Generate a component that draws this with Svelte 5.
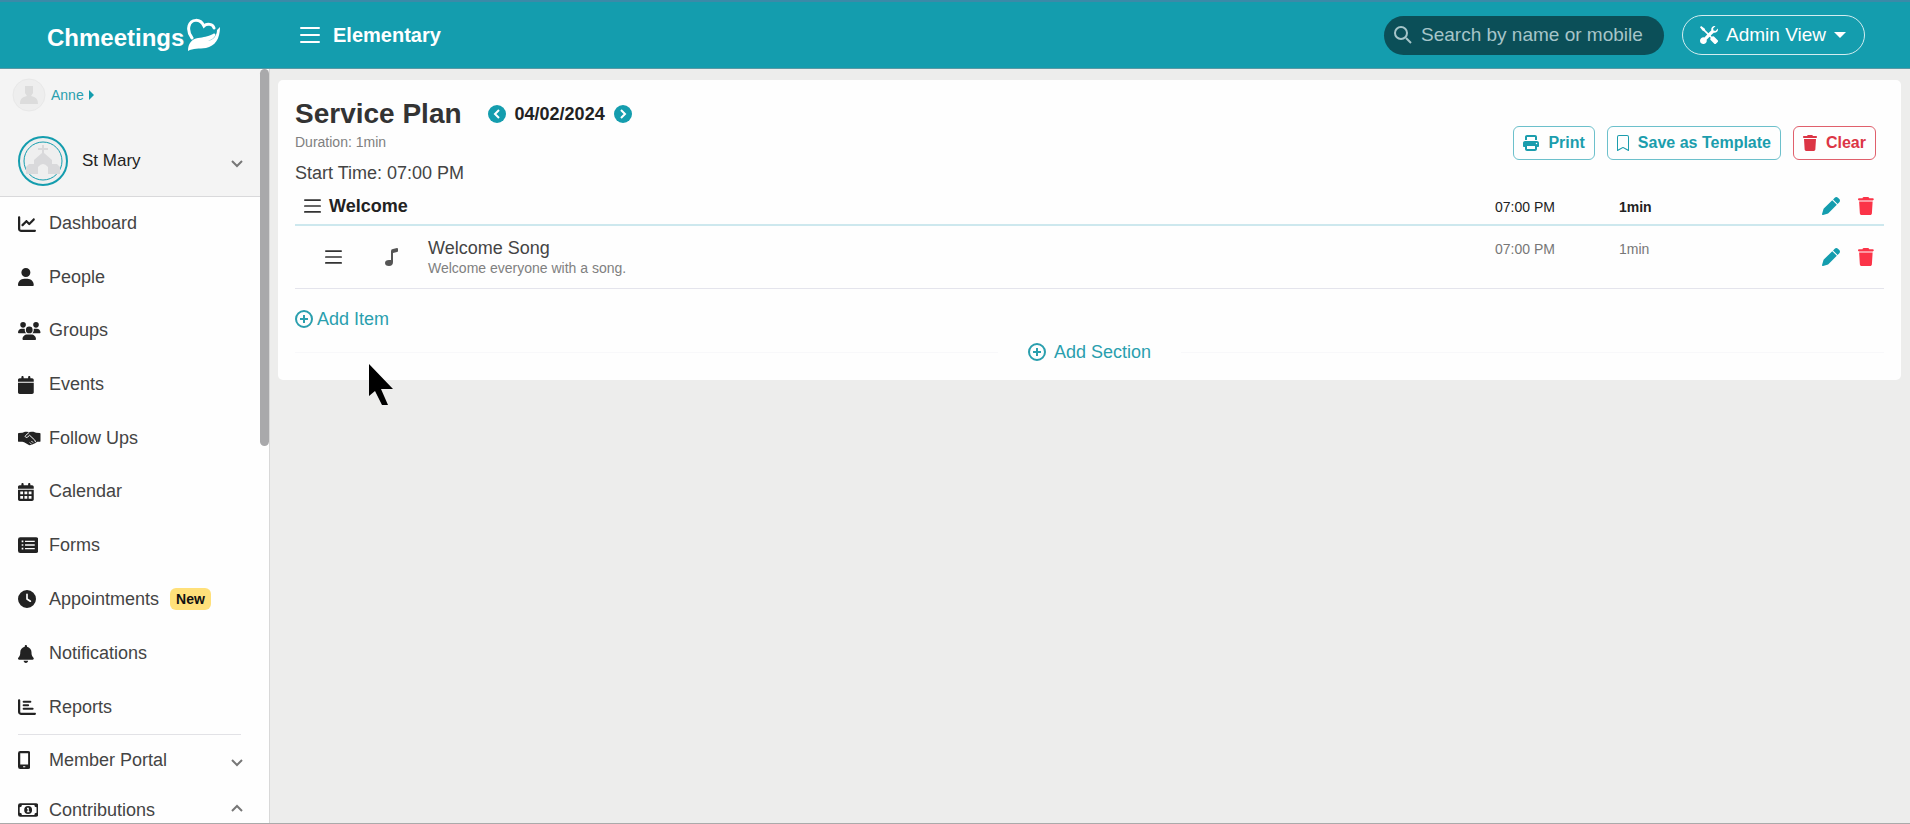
<script>
  const icons = {
    dashboard: { box: '0 0 512 512', d: 'M64 64c0-17.7-14.3-32-32-32S0 46.3 0 64V400c0 44.2 35.8 80 80 80H480c17.7 0 32-14.3 32-32s-14.3-32-32-32H80c-8.8 0-16-7.2-16-16V64zm406.6 86.6c12.5-12.5 12.5-32.8 0-45.3s-32.8-12.5-45.3 0L320 210.7l-57.4-57.4c-12.5-12.5-32.8-12.5-45.3 0l-112 112c-12.5 12.5-12.5 32.8 0 45.3s32.8 12.5 45.3 0L240 221.3l57.4 57.4c12.5 12.5 32.8 12.5 45.3 0l128-128z' },
    people: { box: '0 0 448 512', d: 'M224 256A128 128 0 1 0 224 0a128 128 0 1 0 0 256zm-45.7 48C79.8 304 0 383.8 0 482.3C0 498.7 13.3 512 29.7 512H418.3c16.4 0 29.7-13.3 29.7-29.7C448 383.8 368.2 304 269.7 304H178.3z' },
    groups: { box: '0 0 640 512', d: 'M64 80a80 80 0 1 1 160 0a80 80 0 1 1-160 0zM432 80a80 80 0 1 1 160 0a80 80 0 1 1-160 0zM0 299c0-59 48-107 107-107h43c16 0 31 4 45 10c-1 7-2 14-2 22c0 38 17 72 43 96H21c-12 0-21-10-21-21zM405 320c26-24 43-58 43-96c0-8-1-15-2-22c14-6 29-10 45-10h43c59 0 106 48 106 107c0 11-9 21-21 21H405zM224 224a96 96 0 1 1 192 0a96 96 0 1 1-192 0zM128 485c0-73 60-133 133-133h118c73 0 133 60 133 133c0 15-12 27-27 27H155c-15 0-27-12-27-27z' },
    events: { box: '0 0 448 512', d: 'M96 32V64H48C21.5 64 0 85.5 0 112v48H448V112c0-26.5-21.5-48-48-48H352V32c0-17.7-14.3-32-32-32s-32 14.3-32 32V64H160V32c0-17.7-14.3-32-32-32S96 14.3 96 32zM448 192H0V464c0 26.5 21.5 48 48 48H400c26.5 0 48-21.5 48-48V192z' },
    calendar: { box: '0 0 448 512', d: 'M96 32V64H48C21.5 64 0 85.5 0 112v48H448V112c0-26.5-21.5-48-48-48H352V32c0-17.7-14.3-32-32-32s-32 14.3-32 32V64H160V32c0-17.7-14.3-32-32-32S96 14.3 96 32zM448 192H0V464c0 26.5 21.5 48 48 48H400c26.5 0 48-21.5 48-48V192zM64 240h80v80H64zM184 240h80v80h-80zM304 240h80v80h-80zM64 368h80v80H64zM184 368h80v80h-80zM304 368h80v80h-80z' },
    forms: { box: '0 0 576 512', d: 'M64 32H512a64 64 0 0 1 64 64V416a64 64 0 0 1-64 64H64a64 64 0 0 1-64-64V96A64 64 0 0 1 64 32zM104 128v48h48v-48zM200 132v40h276v-40zM104 232v48h48v-48zM200 236v40h276v-40zM104 336v48h48v-48zM200 340v40h276v-40z' },
    appointments: { box: '0 0 512 512', d: 'M256 0a256 256 0 1 1 0 512A256 256 0 1 1 256 0zM232 120V256c0 8 4 15.5 10.7 20l96 64c11 7.4 25.9 4.4 33.3-6.7s4.4-25.9-6.7-33.3L280 243.2V120c0-13.3-10.7-24-24-24s-24 10.7-24 24z' },
    notifications: { box: '0 0 448 512', d: 'M224 0c-17.7 0-32 14.3-32 32V51.2C119 66 64 130.6 64 208v18.8c0 47-17.3 92.4-48.5 127.6l-7.4 8.3c-8.4 9.4-10.4 22.9-5.3 34.4S19.4 416 32 416H416c12.6 0 24-7.4 29.2-18.9s3.1-25-5.3-34.4l-7.4-8.3C401.3 319.2 384 273.9 384 226.8V208c0-77.4-55-142-128-156.8V32c0-17.7-14.3-32-32-32zm45.3 493.3c12-12 18.7-28.3 18.7-45.3H160c0 17 6.7 33.3 18.7 45.3s28.3 18.7 45.3 18.7s33.3-6.7 45.3-18.7z' },
    reports: { box: '0 0 512 512', d: 'M32 32c17.7 0 32 14.3 32 32V400c0 8.8 7.2 16 16 16H480c17.7 0 32 14.3 32 32s-14.3 32-32 32H80c-44.2 0-80-35.8-80-80V64C0 46.3 14.3 32 32 32zM160 80H352a28 28 0 0 1 0 56H160a28 28 0 0 1 0-56zM160 180H288a28 28 0 0 1 0 56H160a28 28 0 0 1 0-56zM160 280H416a28 28 0 0 1 0 56H160a28 28 0 0 1 0-56z' },
    portal: { box: '16 0 352 512', d: 'M80 0H304a64 64 0 0 1 64 64V448a64 64 0 0 1-64 64H80a64 64 0 0 1-64-64V64A64 64 0 0 1 80 0zM80 64V384H304V64zM160 432v32h64v-32z' },
    contributions: { box: '0 0 576 512', d: 'M64 64H512a64 64 0 0 1 64 64V384a64 64 0 0 1-64 64H64a64 64 0 0 1-64-64V128A64 64 0 0 1 64 64zM112 112a64 64 0 0 1-64 64V336a64 64 0 0 1 64 64H464a64 64 0 0 1 64-64V176a64 64 0 0 1-64-64zM288 144a112 112 0 1 1 0 224a112 112 0 1 1 0-224zM256 192v32h16v64h-20v32h76v-32h-20v-96z' },
    print: { box: '0 0 512 512', d: 'M128 0C92.7 0 64 28.7 64 64v96h64V64H384v96h64V64c0-35.3-28.7-64-64-64H128zM384 352v96H128V352H384zm64 32h32c17.7 0 32-14.3 32-32V256c0-35.3-28.7-64-64-64H64c-35.3 0-64 28.7-64 64v96c0 17.7 14.3 32 32 32H64v64c0 35.3 28.7 64 64 64H384c35.3 0 64-28.7 64-64V384zM432 248a24 24 0 1 1 0 48 24 24 0 1 1 0-48z' },
    bookmark: { box: '2 0 12 16', d: 'M2 2a2 2 0 0 1 2-2h8a2 2 0 0 1 2 2v13.5a.5.5 0 0 1-.777.416L8 13.101l-5.223 2.815A.5.5 0 0 1 2 15.5zm2-1a1 1 0 0 0-1 1v12.566l4.723-2.482a.5.5 0 0 1 .554 0L13 14.566V2a1 1 0 0 0-1-1z' },
    trash: { box: '0 0 448 512', d: 'M135.2 17.7L128 32H32C14.3 32 0 46.3 0 64S14.3 96 32 96H416c17.7 0 32-14.3 32-32s-14.3-32-32-32H320l-7.2-14.3C307.4 6.8 296.3 0 284.2 0H163.8c-12.1 0-23.2 6.8-28.6 17.7zM416 128H32L53.2 467c1.6 25.3 22.6 45 47.9 45H346.9c25.3 0 46.3-19.7 47.9-45L416 128z' },
    pen: { box: '0 0 512 512', d: 'M362.7 19.3L314.3 67.7 444.3 197.7l48.4-48.4c25-25 25-65.5 0-90.5L453.3 19.3c-25-25-65.5-25-90.5 0zm-71 71L58.6 323.5c-10.4 10.4-18 23.3-22.2 37.4L1 481.2C-1.5 489.7 .8 498.8 7 505s15.3 8.5 23.7 6.1l120.3-35.4c14.1-4.2 27-11.8 37.4-22.2L421.7 220.3 291.7 90.3z' },
    tools: { box: '0 0 16 16', d: 'M1 0 0 1l2.2 3.081a1 1 0 0 0 .815.419h.07a1 1 0 0 1 .708.293l2.675 2.675-2.617 2.654A3.003 3.003 0 0 0 0 13a3 3 0 1 0 5.878-.851l2.654-2.617.968.968-.305.914a1 1 0 0 0 .242 1.023l3.27 3.27a.997.997 0 0 0 1.414 0l1.586-1.586a.997.997 0 0 0 0-1.414l-3.27-3.27a1 1 0 0 0-1.023-.242L10.5 9.5l-.96-.96 2.68-2.643A3.005 3.005 0 0 0 16 3q0-.405-.102-.777l-2.14 2.141L12 4l-.364-1.757L13.777.102a3 3 0 0 0-3.675 3.68L7.462 6.46 4.793 3.793a1 1 0 0 1-.293-.707v-.071a1 1 0 0 0-.419-.814z' },
  };

  const links = [
    { label: 'Dashboard', icon: 'dashboard' },
    { label: 'People', icon: 'people' },
    { label: 'Groups', icon: 'groups' },
    { label: 'Events', icon: 'events' },
    { label: 'Follow Ups', icon: 'handshake' },
    { label: 'Calendar', icon: 'calendar' },
    { label: 'Forms', icon: 'forms' },
    { label: 'Appointments', icon: 'appointments', badge: 'New' },
    { label: 'Notifications', icon: 'notifications' },
    { label: 'Reports', icon: 'reports' },
  ];

  let menus = $state([
    { label: 'Member Portal', icon: 'portal', open: false },
    { label: 'Contributions', icon: 'contributions', open: true },
  ]);

  const sections = [
    {
      name: 'Welcome',
      time: '07:00 PM',
      duration: '1min',
      items: [
        { name: 'Welcome Song', note: 'Welcome everyone with a song.', time: '07:00 PM', duration: '1min' },
      ],
    },
  ];

  let search = $state('');
</script>

{#snippet icon(name)}
  {#if name === 'handshake'}
    <svg class="icon" viewBox="0 0 640 512" aria-hidden="true">
      <path d="M0 138q0-24 24-24l104-8 70-26q60-10 118 8q60-18 122-8l76 26 102 8q24 0 24 24v200q0 24-24 24h-70l-60 42-40 16q-20 28-60 22-52 34-100 0L174 378l-50-16H24q-24 0-24-24z" />
      <path class="cut" d="M322 92L212 190q-20 34 12 48 28 8 52-12l54-48 146 138q26 26 16 56M380 340l48 48M336 384l38 38" />
    </svg>
  {:else}
    <svg class="icon" viewBox={icons[name].box} aria-hidden="true">
      <path fill-rule="evenodd" d={icons[name].d} />
    </svg>
  {/if}
{/snippet}

{#snippet bars()}
  <svg class="bars" viewBox="0 0 20 16" aria-hidden="true"><path d="M1 1h18M1 8h18M1 15h18" /></svg>
{/snippet}

{#snippet chevron(up)}
  <svg class="chevron" class:up viewBox="0 0 12 8" aria-hidden="true"><path d="M1 1l5 5 5-5" /></svg>
{/snippet}

{#snippet plus()}
  <svg class="plus" viewBox="0 0 18 18" aria-hidden="true">
    <circle cx="9" cy="9" r="8" /><path d="M9 5v8M5 9h8" />
  </svg>
{/snippet}

{#snippet actions(name)}
  <div class="actions">
    <button class="edit" aria-label="Edit {name}">{@render icon('pen')}</button>
    <button class="delete" aria-label="Delete {name}">{@render icon('trash')}</button>
  </div>
{/snippet}

<div class="page">
  <header class="topbar">
    <a class="brand" href="/">
      <span>Chmeetings</span>
      <svg viewBox="0 0 34 34" aria-hidden="true">
        <path class="heart" d="M5 20C2 16 1 12 2 8C4 1 13 0 17 8C20 5 26 6 27 10" />
        <path d="M1 33c0-8 4-12 10-13 6-1 9-1 15-4 2-1 3 0 2 2-1 2-4 4-7 5 5-1 9-5 9-11l3-3c0 12-5 19-14 21-7 1-13 0-18 3z" />
      </svg>
    </a>
    <button class="toggle" aria-label="Toggle menu">{@render bars()}</button>
    <h1>Elementary</h1>
    <label class="search">
      <svg viewBox="0 0 18 18" aria-hidden="true"><circle cx="7" cy="7" r="6" /><path d="M12 12l5 5" /></svg>
      <input type="text" placeholder="Search by name or mobile" aria-label="Search" bind:value={search} />
    </label>
    <button class="view">
      {@render icon('tools')}
      Admin View
      <svg class="caret" viewBox="0 0 12 6" aria-hidden="true"><path d="M0 0h12L6 6z" /></svg>
    </button>
  </header>

  <div class="body">
    <aside class="sidebar">
      <div class="menu">
        <div class="account">
          <a class="user" href="/profile">
            <svg class="avatar" viewBox="0 0 34 34" aria-hidden="true">
              <circle cx="17" cy="17" r="16" /><path d="M13 8h8v7l-2 3c5 1 7 3 7 8H8c0-5 2-7 7-8l-2-3z" />
            </svg>
            Anne
            <svg class="arrow" viewBox="0 0 5 10" aria-hidden="true"><path d="M0 0l5 5-5 5z" /></svg>
          </a>
          <button class="church">
            <svg class="crest" viewBox="0 0 52 52" aria-hidden="true">
              <circle class="ring" cx="26" cy="26" r="24" stroke-width="2" />
              <circle class="ring" cx="26" cy="26" r="19" stroke-width="1" />
              <path d="M25 10h2v3h4v2h-4v3l8 7v4h5l3 3v7H31v-7q-5-6-10 0v7H9v-7l3-3h5v-4l8-7v-3h-4v-2h4z" />
            </svg>
            <span>St Mary</span>
            {@render chevron(false)}
          </button>
        </div>

        <nav>
          <div class="links">
            {#each links as link}
              <a class="link" href="/{link.icon}">
                {@render icon(link.icon)}
                {link.label}
                {#if link.badge}<span class="badge">{link.badge}</span>{/if}
              </a>
            {/each}
          </div>
          <hr />
          {#each menus as menu}
            <button class="group" aria-expanded={menu.open} onclick={() => (menu.open = !menu.open)}>
              {@render icon(menu.icon)}
              <span>{menu.label}</span>
              {@render chevron(menu.open)}
            </button>
          {/each}
        </nav>
      </div>
      <div class="scroll"><div class="thumb"></div></div>
    </aside>

    <main>
      <section class="card">
        <div class="head">
          <div>
            <div class="title">
              <h2>Service Plan</h2>
              <div class="date">
                <button aria-label="Previous"><svg viewBox="0 0 18 18"><path d="M11 5L7 9l4 4" /></svg></button>
                <span>04/02/2024</span>
                <button aria-label="Next"><svg viewBox="0 0 18 18"><path d="M7 5l4 4-4 4" /></svg></button>
              </div>
            </div>
            <p class="length">Duration: 1min</p>
            <p class="start">Start Time: 07:00 PM</p>
          </div>
          <div class="tools">
            <button>{@render icon('print')}Print</button>
            <button>{@render icon('bookmark')}Save as Template</button>
            <button class="danger">{@render icon('trash')}Clear</button>
          </div>
        </div>

        {#each sections as section}
          <div class="row section">
            <div class="name">{@render bars()}<h3>{section.name}</h3></div>
            <span class="time">{section.time}</span>
            <strong class="time">{section.duration}</strong>
            {@render actions(section.name)}
          </div>
          {#each section.items as item}
            <div class="row item">
              <div class="name">
                {@render bars()}
                <svg class="music" viewBox="0 0 13 18" aria-hidden="true">
                  <path d="M6 3q0-2 2-2l4-1q1 0 1 1v2q0 1-1 1l-4 1v9q0 4-4 4-4 0-4-3t4-3h2z" />
                </svg>
                <div>
                  <p class="song">{item.name}</p>
                  <p class="note">{item.note}</p>
                </div>
              </div>
              <span class="time">{item.time}</span>
              <span class="time">{item.duration}</span>
              {@render actions(item.name)}
            </div>
          {/each}
          <button class="add">{@render plus()}Add Item</button>
        {/each}

        <div class="more">
          <button class="add wide">{@render plus()}Add Section</button>
        </div>
      </section>
    </main>
  </div>

  <svg class="cursor" viewBox="0 0 26 42" aria-hidden="true">
    <path d="M1 0v32l6-5 7 14h6l-7-16h12z" />
  </svg>
</div>

<style>
  :global(body) {
    margin: 0;
    font-family: "Liberation Sans", Arial, sans-serif;
    font-size: 18px;
    color: #444;
  }
  .page {
    position: relative;
    box-sizing: border-box;
    height: 100vh;
    overflow: hidden;
    display: flex;
    flex-direction: column;
    border-bottom: 1px solid #aaa;
  }
  button {
    font: inherit;
    color: inherit;
    background: none;
    border: 0;
    padding: 0;
    cursor: pointer;
  }
  a {
    color: inherit;
    text-decoration: none;
  }
  h1, h2, h3, p {
    margin: 0;
  }
  svg {
    display: block;
    flex: none;
    fill: currentColor;
  }
  .icon {
    height: 18px;
  }
  .cut {
    fill: none;
    stroke: #fefefe;
    stroke-width: 28;
  }
  .bars {
    width: 20px;
    height: 16px;
    fill: none;
    stroke: currentColor;
    stroke-width: 2;
    stroke-linecap: round;
  }
  .chevron {
    width: 12px;
    height: 8px;
    margin-top: 6px;
    fill: none;
    stroke: #777;
    stroke-width: 2;
  }
  .chevron.up {
    margin: 0 0 4px;
    transform: rotate(180deg);
  }

  .topbar {
    flex: none;
    box-sizing: border-box;
    height: 69px;
    padding: 0 45px 0 47px;
    display: flex;
    align-items: center;
    background: #149dae;
    border-top: 2px solid #3b8aa8;
    border-bottom: 1px solid #5b98a4;
    color: #fff;
  }
  .brand {
    display: flex;
    align-items: center;
    width: 253px;
    font-size: 24px;
    font-weight: bold;
  }
  .brand span {
    padding-top: 6px;
  }
  .brand svg {
    width: 34px;
    height: 34px;
    margin-left: 3px;
  }
  .heart {
    fill: none;
    stroke: #fff;
    stroke-width: 3;
    stroke-linecap: round;
  }
  h1 {
    flex: 1;
    margin-left: 13px;
    font-size: 20px;
  }
  .search {
    display: flex;
    align-items: center;
    gap: 9px;
    box-sizing: border-box;
    width: 280px;
    height: 39px;
    padding: 0 10px;
    border-radius: 20px;
    background: #0b4f58;
    color: #a6c5c9;
  }
  .search svg {
    width: 18px;
    height: 18px;
    fill: none;
    stroke: currentColor;
    stroke-width: 2;
  }
  .search input {
    flex: 1;
    min-width: 0;
    padding: 0;
    border: 0;
    outline: 0;
    background: none;
    font: inherit;
    font-size: 19px;
    color: #fff;
  }
  .search input::placeholder {
    color: #a6c5c9;
  }
  .view {
    display: flex;
    align-items: center;
    gap: 8px;
    height: 40px;
    margin-left: 18px;
    padding: 0 18px 0 17px;
    border: 1px solid #d3edf0;
    border-radius: 20px;
    font-size: 19px;
  }
  .caret {
    width: 12px;
    height: 6px;
  }

  .body {
    flex: 1;
    min-height: 0;
    display: flex;
  }
  .sidebar {
    flex: none;
    width: 269px;
    display: flex;
    overflow: hidden;
    background: #fefefe;
    border-right: 1px solid #d8d8d8;
  }
  .menu {
    flex: 1;
  }
  .scroll {
    width: 9px;
  }
  .thumb {
    height: 50%;
    border-radius: 5px;
    background: #a9a9ab;
  }
  .account {
    background: #f4f4f4;
    border-bottom: 1px solid #d9d9db;
  }
  .user {
    display: flex;
    align-items: center;
    height: 52px;
    padding-left: 12px;
    font-size: 14px;
    color: #2a9fae;
  }
  .avatar {
    width: 34px;
    height: 34px;
    margin-right: 5px;
    fill: #dcdcdc;
  }
  .avatar circle {
    fill: #eee;
    stroke: #e8e8e8;
  }
  .arrow {
    width: 5px;
    height: 10px;
    margin-left: 5px;
    fill: #149dae;
  }
  .church {
    display: flex;
    align-items: center;
    width: 100%;
    height: 75px;
    padding: 4px 17px 0;
    font-size: 17px;
    color: #222;
  }
  .crest {
    width: 52px;
    height: 52px;
    margin-right: 13px;
    fill: #d9d9db;
  }
  .ring {
    fill: #efefef;
    stroke: #149dae;
  }
  .church span,
  .group span {
    flex: 1;
    text-align: left;
  }
  .links {
    display: grid;
    height: 537px;
  }
  .link,
  .group {
    display: grid;
    grid-template-columns: 31px auto 1fr;
    align-items: center;
    justify-items: start;
    box-sizing: border-box;
    width: 100%;
    padding: 0 17px 0 18px;
  }
  .group {
    height: 50px;
    grid-template-columns: 31px 1fr auto;
  }
  .link .icon,
  .group .icon {
    fill: #222;
  }
  .badge {
    margin-left: 11px;
    padding: 3px 6px;
    border-radius: 6px;
    background: #ffe07a;
    color: #111;
    font-size: 14px;
    line-height: 16px;
    font-weight: bold;
  }
  hr {
    margin: 0 19px 0 18px;
    border: 0;
    border-top: 1px solid #e2e2e6;
  }

  main {
    flex: 1;
    min-width: 0;
    padding: 11px 9px 0 8px;
    background: #ededec;
  }
  .card {
    padding: 17px;
    border-radius: 5px;
    background: #fefefe;
  }
  .head {
    display: flex;
    align-items: flex-start;
    justify-content: space-between;
    height: 96px;
  }
  .title {
    display: flex;
    align-items: center;
    gap: 26px;
    height: 34px;
  }
  h2 {
    font-size: 28px;
    color: #333;
  }
  .date {
    display: flex;
    align-items: center;
    gap: 9px;
    font-weight: bold;
    color: #222;
  }
  .date svg {
    width: 18px;
    height: 18px;
    border-radius: 50%;
    background: #149dae;
    fill: none;
    stroke: #fff;
    stroke-width: 2;
  }
  .length {
    font-size: 14px;
    line-height: 22px;
    color: #808080;
  }
  .start {
    line-height: 40px;
  }
  .tools {
    display: flex;
    gap: 12px;
    padding: 29px 8px 0 0;
  }
  .tools button {
    display: flex;
    align-items: center;
    gap: 9px;
    box-sizing: border-box;
    height: 34px;
    padding: 0 9px;
    border: 1px solid #6cc0cb;
    border-radius: 6px;
    font-size: 16px;
    font-weight: bold;
    color: #1b9dad;
  }
  .tools .icon {
    height: 16px;
  }
  .tools .danger {
    border-color: #e0606c;
    color: #dc3545;
  }

  .row {
    display: grid;
    grid-template-columns: 1fr 124px 203px 62px;
    align-items: center;
  }
  .section {
    height: 25px;
    padding-bottom: 6px;
    border-bottom: 2px solid #cde8ee;
    color: #222;
  }
  .name {
    display: flex;
    align-items: center;
  }
  .name .bars {
    width: 17px;
    height: 14px;
    stroke: #333;
  }
  .section .name {
    gap: 8px;
    padding-left: 9px;
  }
  .section .time {
    padding-top: 2px;
  }
  h3 {
    font-size: 18px;
    line-height: 24px;
  }
  .time {
    font-size: 14px;
    line-height: 22px;
  }
  .item {
    height: 62px;
    border-bottom: 1px solid #e4e4ec;
  }
  .item .name {
    padding-left: 30px;
  }
  .item .time {
    align-self: start;
    padding-top: 12px;
    color: #777;
  }
  .music {
    width: 13px;
    height: 18px;
    margin: 0 30px 0 43px;
    fill: #555;
  }
  .song {
    line-height: 22px;
  }
  .note {
    font-size: 14px;
    line-height: 18px;
    color: #808080;
  }
  .actions {
    display: flex;
    gap: 18px;
  }
  .edit {
    color: #149dae;
  }
  .delete {
    color: #fb3448;
  }
  .add {
    display: flex;
    align-items: center;
    gap: 4px;
    margin-top: 19px;
    line-height: 22px;
    color: #2a9fae;
  }
  .plus {
    width: 18px;
    height: 18px;
    fill: none;
    stroke: currentColor;
    stroke-width: 2;
  }
  .more {
    display: flex;
    align-items: center;
    margin-top: 11px;
  }
  .more::before,
  .more::after {
    content: "";
    flex: 1;
    border-top: 1px solid #f8f8fa;
  }
  .wide {
    gap: 8px;
    margin: 0 30px;
  }
  .cursor {
    position: absolute;
    left: 368px;
    top: 364px;
    width: 26px;
    height: 42px;
    fill: #000;
  }
</style>
